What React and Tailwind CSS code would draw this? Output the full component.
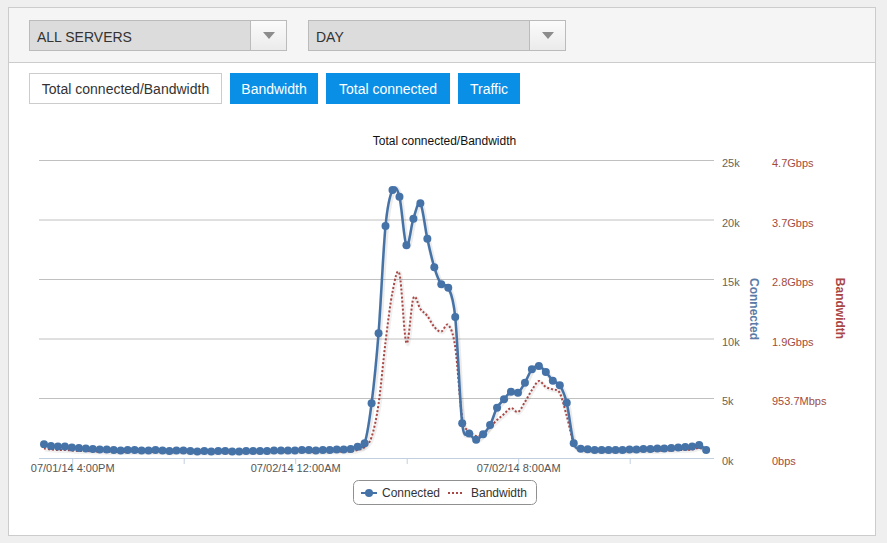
import React from 'react'

const connected = [
  444.3, 446, 446.5, 446.5, 447.5, 448, 448.5, 449, 449.5, 449.5,
  450, 450.5, 450, 450, 450.5, 450.5, 450, 450.5, 451, 450.5,
  450.5, 451, 451.5, 451, 451.5, 451, 451, 451.5, 451.5, 451,
  451, 451, 451, 450.5, 450.5, 450.5, 450.5, 450, 450, 450.5,
  450, 450, 449.5, 449.5, 449, 446.7, 443.3, 403.3, 333.3, 226,
  190, 196.7, 245.3, 218.7, 203.3, 238.7, 267.3, 284.3, 287.7, 317,
  423.3, 433.5, 439.7, 434.3, 425, 407.7, 399.3, 391.7, 392.7, 382.7,
  369.3, 366, 372, 380.7, 385.3, 402.7, 443.3, 448.7, 449.3, 450,
  450, 450, 450, 450, 449.5, 449.5, 449, 449, 448.5, 448.5,
  448, 447.5, 447, 446.5, 445, 450,
]

const bandwidth = [
  448.5, 449.5, 450, 450, 450.5, 451, 451, 451.5, 451.5, 452,
  452, 452, 452, 452, 452, 452, 452, 452, 452.5, 452,
  452, 452.5, 452.5, 452.5, 452.5, 452.5, 452, 452.5, 452.5, 452.5,
  452, 452, 452, 452, 452, 452, 452, 451.5, 452, 452,
  452, 451.5, 451.5, 451.5, 451.5, 450, 447, 437, 404, 342,
  292, 274, 343, 298, 309, 316, 327, 331.5, 325, 347,
  418, 431, 436, 434, 427, 420, 414, 408, 412, 402,
  390, 381, 387, 389.5, 393, 416, 443, 450, 451, 451.5,
  451.5, 451.5, 451.5, 451.5, 451.5, 451, 451, 451, 451, 450.5,
  450.5, 450, 450, 449.5, 448, 451,
]

const xAt = (k) => 44 + k * 6.97

// catmull-rom through the points, good enough for the highcharts spline look
function splinePath(ys) {
  const pts = ys.map((y, k) => [xAt(k), y])
  let d = `M${pts[0][0]},${pts[0][1]}`
  for (let i = 0; i < pts.length - 1; i++) {
    const p0 = pts[i - 1] || pts[i]
    const p1 = pts[i]
    const p2 = pts[i + 1]
    const p3 = pts[i + 2] || p2
    const c1x = p1[0] + (p2[0] - p0[0]) / 6
    const c1y = p1[1] + (p2[1] - p0[1]) / 6
    const c2x = p2[0] - (p3[0] - p1[0]) / 6
    const c2y = p2[1] - (p3[1] - p1[1]) / 6
    d += ` C${c1x.toFixed(2)},${c1y.toFixed(2)} ${c2x.toFixed(2)},${c2y.toFixed(2)} ${p2[0].toFixed(2)},${p2[1]}`
  }
  return d
}

const grid = [160.5, 220, 279.5, 339, 398.5]
const leftLabels = ['25k', '20k', '15k', '10k', '5k', '0k']
const rightLabels = ['4.7Gbps', '3.7Gbps', '2.8Gbps', '1.9Gbps', '953.7Mbps', '0bps']
const ticks = [0, 1, 2, 3, 4, 5].map((i) => 72.7 + i * 111.5)

function Select({ label }) {
  return (
    <div className="flex w-[258px] h-[31px] border border-[#bbbbbb]">
      <div className="flex-1 flex items-center pl-[7px] pt-[4px] bg-[#dcdcdc] text-[14px] text-[#333]">{label}</div>
      <div className="w-[36px] flex items-center justify-center border-l border-[#bbbbbb] bg-gradient-to-b from-[#fbfbfb] to-[#ebebeb]">
        <div className="w-0 h-0 border-x-[6px] border-x-transparent border-t-[7px] border-t-[#8c8c8c]" />
      </div>
    </div>
  )
}

function Chart() {
  const cPath = splinePath(connected)
  const bPath = splinePath(bandwidth)
  return (
    <svg width="866" height="430" viewBox="9 104 866 430" className="block">
      <text x="444.5" y="144.5" textAnchor="middle" fontSize="12" fill="#111">Total connected/Bandwidth</text>

      {grid.map((y) => (
        <line key={y} x1="39" x2="714" y1={y} y2={y} stroke="#c0c0c0" strokeWidth="1" />
      ))}
      <line x1="39" x2="714" y1="458.5" y2="458.5" stroke="#c0d0e0" strokeWidth="1" />
      {ticks.map((x) => (
        <line key={x} x1={x} x2={x} y1="458.5" y2="464" stroke="#c0d0e0" strokeWidth="1" />
      ))}

      {[...grid, 458.5].map((y, i) => (
        <g key={i} fontSize="11">
          <text x="722" y={y + 6.5} fill="#6b6457">{leftLabels[i]}</text>
          <text x="772" y={y + 6.5} fill="#a24b3c">{rightLabels[i]}</text>
        </g>
      ))}

      <text transform="translate(753.5,309) rotate(90)" textAnchor="middle" dominantBaseline="central" fontSize="12" fontWeight="bold" fill="#5b7ba6">Connected</text>
      <text transform="translate(840,308.5) rotate(90)" textAnchor="middle" dominantBaseline="central" fontSize="12" fontWeight="bold" fill="#aa4643">Bandwidth</text>

      <g fontSize="11" fill="#555" textAnchor="middle">
        <text x={ticks[0]} y="471.5">07/01/14 4:00PM</text>
        <text x={ticks[2]} y="471.5">07/02/14 12:00AM</text>
        <text x={ticks[4]} y="471.5">07/02/14 8:00AM</text>
      </g>

      <path d={bPath} transform="translate(1,1)" fill="none" stroke="#000" strokeOpacity="0.06" strokeWidth="4" />
      <path d={bPath} fill="none" stroke="#aa4643" strokeWidth="2" strokeDasharray="2 2" />

      <path d={cPath} transform="translate(1,1)" fill="none" stroke="#000" strokeOpacity="0.08" strokeWidth="5" />
      <path d={cPath} fill="none" stroke="#4572a7" strokeWidth="2.5" />
      {connected.map((y, k) => (
        <circle key={k} cx={xAt(k)} cy={y} r="4" fill="#4572a7" />
      ))}

      <rect x="353.5" y="480.5" width="183" height="24" rx="5" fill="#fff" stroke="#909090" />
      <line x1="361" x2="377" y1="493" y2="493" stroke="#4572a7" strokeWidth="2" />
      <circle cx="369" cy="493" r="4" fill="#4572a7" />
      <text x="382" y="497" fontSize="12" fill="#333">Connected</text>
      <line x1="448" x2="464" y1="493" y2="493" stroke="#aa4643" strokeWidth="2" strokeDasharray="2 2" />
      <text x="471" y="497" fontSize="12" fill="#333">Bandwidth</text>
    </svg>
  )
}

export default function App() {
  return (
    <div className="w-[887px] h-[543px] bg-[#efefef] pt-[7px] pl-[8px]" style={{ fontFamily: '"Liberation Sans", Arial, sans-serif' }}>
      <div className="w-[868px] h-[529px] border border-[#cccccc] bg-white flex flex-col">
        <div className="h-[55px] shrink-0 bg-[#f5f5f5] border-b border-[#cccccc] flex items-start gap-[21px] pt-[12px] pl-[20px]">
          <Select label="ALL SERVERS" />
          <Select label="DAY" />
        </div>
        <div className="flex gap-[8px] mt-[10px] pl-[20px] h-[31px] text-[14px]">
          <button className="w-[193px] h-[31px] pt-[2px] bg-white border border-[#cccccc] text-[#333]">Total connected/Bandwidth</button>
          <button className="w-[88px] h-[31px] pt-[2px] bg-[#0a8fe6] text-white">Bandwidth</button>
          <button className="w-[124px] h-[31px] pt-[2px] bg-[#0a8fe6] text-white">Total connected</button>
          <button className="w-[62px] h-[31px] pt-[2px] bg-[#0a8fe6] text-white">Traffic</button>
        </div>
        <Chart />
      </div>
    </div>
  )
}
